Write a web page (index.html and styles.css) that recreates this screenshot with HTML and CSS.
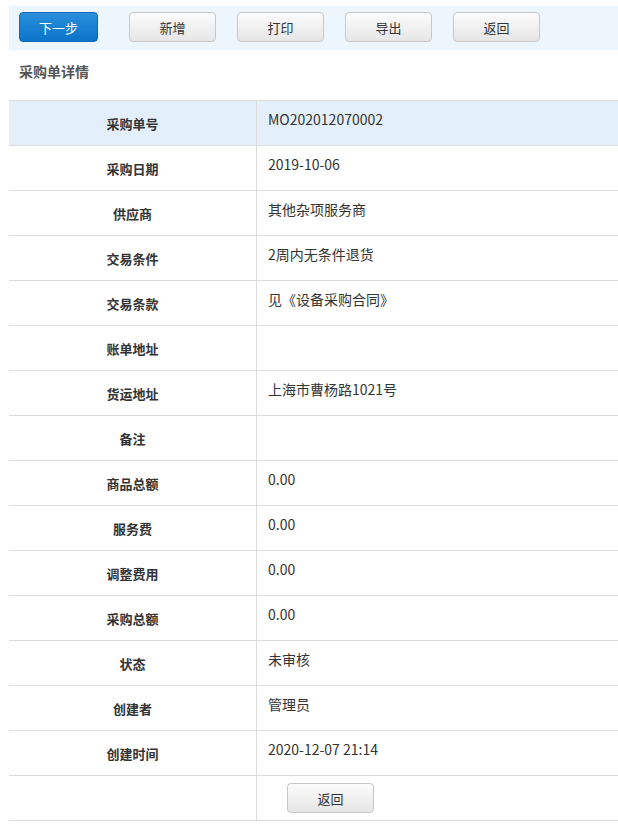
FILE: index.html
```html
<!DOCTYPE html>
<html lang="zh-CN">

<head>
    <meta charset="UTF-8">
    <meta name="viewport" content="width=device-width, initial-scale=1.0">
    <title>采购单详情</title>
    <link rel="stylesheet" href="styles.css">
</head>

<body>
    <div class="toolbar">
        <button class="btn btn-primary">下一步</button>
        <button class="btn">新增</button>
        <button class="btn">打印</button>
        <button class="btn">导出</button>
        <button class="btn">返回</button>
    </div>

    <div class="title">采购单详情</div>

    <table class="detail">
        <tr class="first">
            <th>采购单号</th>
            <td>MO202012070002</td>
        </tr>
        <tr>
            <th>采购日期</th>
            <td>2019-10-06</td>
        </tr>
        <tr>
            <th>供应商</th>
            <td>其他杂项服务商</td>
        </tr>
        <tr>
            <th>交易条件</th>
            <td>2周内无条件退货</td>
        </tr>
        <tr>
            <th>交易条款</th>
            <td>见《设备采购合同》</td>
        </tr>
        <tr>
            <th>账单地址</th>
            <td></td>
        </tr>
        <tr>
            <th>货运地址</th>
            <td>上海市曹杨路1021号</td>
        </tr>
        <tr>
            <th>备注</th>
            <td></td>
        </tr>
        <tr>
            <th>商品总额</th>
            <td>0.00</td>
        </tr>
        <tr>
            <th>服务费</th>
            <td>0.00</td>
        </tr>
        <tr>
            <th>调整费用</th>
            <td>0.00</td>
        </tr>
        <tr>
            <th>采购总额</th>
            <td>0.00</td>
        </tr>
        <tr>
            <th>状态</th>
            <td>未审核</td>
        </tr>
        <tr>
            <th>创建者</th>
            <td>管理员</td>
        </tr>
        <tr>
            <th>创建时间</th>
            <td>2020-12-07 21:14</td>
        </tr>
        <tr class="actions">
            <th></th>
            <td><button class="btn">返回</button></td>
        </tr>
    </table>
</body>

</html>
```

FILE: styles.css
```css
body {
    margin: 0;
    padding: 6px 0 0 9px;
    font-family: "Noto Sans CJK SC", "Open Sans", sans-serif;
    color: #333;
    background: #fff;
}

.toolbar {
    background-color: #eef6fd;
    height: 44px;
    box-sizing: border-box;
    padding: 6px 0 0 10px;
    display: flex;
    align-items: flex-start;
    gap: 21px;
}

.btn {
    width: 87px;
    height: 30px;
    border: 1px solid #c8c8c8;
    border-radius: 4px;
    background: linear-gradient(#fbfbfb, #e6e6e6);
    font-family: inherit;
    font-size: 13px;
    color: #333;
    padding: 0;
    cursor: pointer;
}

.btn-primary {
    width: 79px;
    margin-right: 10px;
    border-color: #0c6bb8;
    background: linear-gradient(#2a8fdd, #0b74c8);
    color: #fff;
}

.title {
    height: 50px;
    line-height: 42px;
    padding-left: 10px;
    font-size: 14px;
    font-weight: bold;
    color: #555;
}

.detail {
    width: 609px;
    border-collapse: collapse;
    font-size: 13px;
}

.detail tr {
    height: 45px;
}

.detail th,
.detail td {
    border-top: 1px solid #dcdcdc;
    border-bottom: 1px solid #dcdcdc;
    padding: 0;
}

.detail th {
    width: 247px;
    border-right: 1px solid #dcdcdc;
    font-weight: bold;
    color: #333;
    vertical-align: middle;
}

.detail td {
    vertical-align: top;
    padding: 8px 0 0 11px;
    font-size: 14px;
    color: #333;
}

.detail .first th,
.detail .first td {
    background-color: #e3effb;
}

.detail .actions td {
    padding: 0 0 0 30px;
    vertical-align: middle;
}
```
